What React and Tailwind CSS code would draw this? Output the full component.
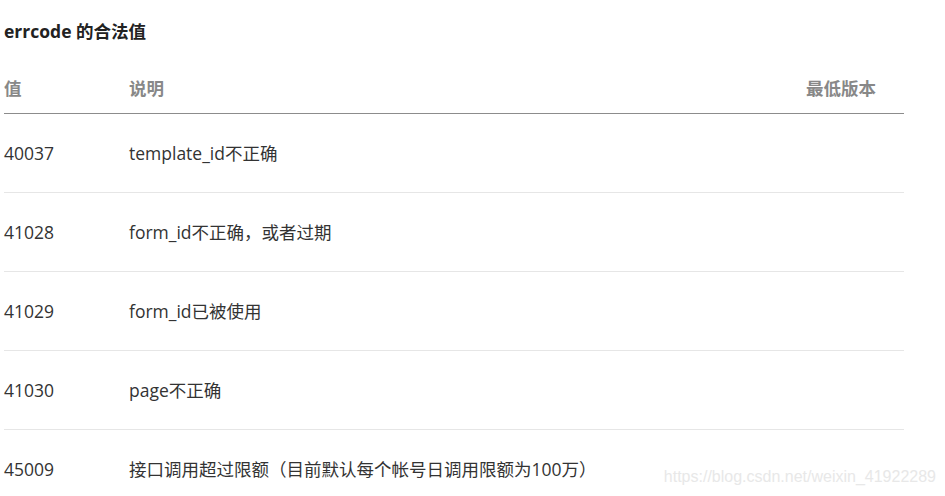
export default function App() {
  const rows = [
    ['40037', 'template_id不正确'],
    ['41028', 'form_id不正确，或者过期'],
    ['41029', 'form_id已被使用'],
    ['41030', 'page不正确'],
    ['45009', '接口调用超过限额（目前默认每个帐号日调用限额为100万）'],
  ];

  return (
    <div
      className="relative w-[945px] h-[496px] overflow-hidden bg-white text-[#333] text-[17.5px]"
      style={{ fontFamily: '"Open Sans", "Noto Sans CJK SC", sans-serif' }}
    >
      <div className="pl-[4px] w-[904px]">
        {/* Title */}
        <h3 className="h-[63px] flex items-center font-bold text-[17.5px] text-[#222] pb-[1px]">
          errcode 的合法值
        </h3>

        {/* Header */}
        <div className="flex h-[51px] items-center border-b border-[#8c8c8c] font-bold text-[#888]">
          <div className="w-[125px]">值</div>
          <div className="flex-1">说明</div>
          <div className="w-[98px]">最低版本</div>
        </div>

        {/* Rows */}
        {rows.map(([code, desc], i) => (
          <div
            key={code}
            className={`flex h-[79px] items-center ${i < rows.length - 1 ? 'border-b border-[#e6e6e6]' : ''}`}
          >
            <div className="w-[125px]">{code}</div>
            <div className="flex-1">{desc}</div>
            <div className="w-[98px]"></div>
          </div>
        ))}
      </div>

      {/* Watermark */}
      <div
        className="absolute right-[9px] bottom-[7px] text-[16px] text-[#e8e8e8]"
        style={{ fontFamily: '"Liberation Sans", Arial, sans-serif' }}
      >
        https://blog.csdn.net/weixin_41922289
      </div>
    </div>
  );
}
